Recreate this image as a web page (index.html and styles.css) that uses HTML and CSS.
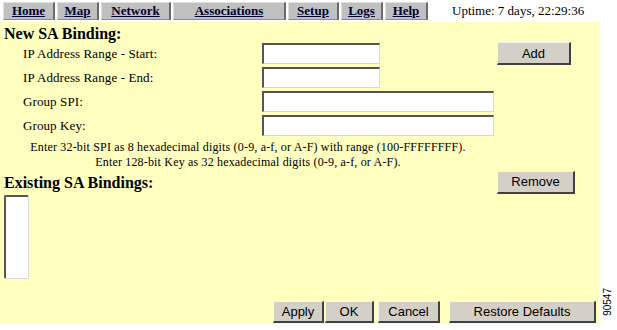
FILE: index.html
```html
<!DOCTYPE html>
<html lang="en">
  <head>
    <meta charset="UTF-8" />
    <title>SA Binding</title>
    <link rel="stylesheet" href="styles.css">
  </head>
  <body>
    <div class="topbar">
      <div class="nav">
        <a class="nav-item w-home" href="#">Home</a>
        <a class="nav-item w-map" href="#">Map</a>
        <a class="nav-item w-network" href="#">Network</a>
        <a class="nav-item w-assoc" href="#">Associations</a>
        <a class="nav-item w-setup" href="#">Setup</a>
        <a class="nav-item w-logs" href="#">Logs</a>
        <a class="nav-item w-help" href="#">Help</a>
      </div>
      <div class="uptime">Uptime: 7 days, 22:29:36</div>
    </div>
    <div class="main">
      <div class="panel">
        <div class="title">New SA Binding:</div>
        <div class="form">
          <label class="label">IP Address Range - Start:</label>
          <input class="field short" type="text">
          <button class="btn btn-add">Add</button>
          <label class="label">IP Address Range - End:</label>
          <input class="field short" type="text">
          <span></span>
          <label class="label">Group SPI:</label>
          <input class="field long" type="text">
          <span></span>
          <label class="label">Group Key:</label>
          <input class="field long" type="text">
          <span></span>
        </div>
        <div class="hint">
          Enter 32-bit SPI as 8 hexadecimal digits (0-9, a-f, or A-F) with range (100-FFFFFFFF).<br>
          Enter 128-bit Key as 32 hexadecimal digits (0-9, a-f, or A-F).
        </div>
        <div class="existing">
          <div class="title">Existing SA Bindings:</div>
          <button class="btn btn-remove">Remove</button>
        </div>
        <select class="listbox" size="5"></select>
        <div class="actions">
          <button class="btn btn-apply">Apply</button>
          <button class="btn btn-ok">OK</button>
          <button class="btn btn-cancel">Cancel</button>
          <button class="btn btn-restore">Restore Defaults</button>
        </div>
      </div>
      <div class="side">
        <span class="figure-id">90547</span>
      </div>
    </div>
  </body>
</html>
```

FILE: styles.css
```css
body {
  margin: 0;
  background: #fff;
  color: #000;
  font-family: "Liberation Serif", "Times New Roman", serif;
}
.topbar {
  display: flex;
  align-items: center;
  height: 22px;
}
.nav {
  display: flex;
  gap: 2px;
  padding-left: 3px;
  height: 18px;
}
.nav-item {
  box-sizing: border-box;
  display: flex;
  justify-content: center;
  align-items: center;
  height: 18px;
  background: #c0c0c0;
  border-top: 1px solid #e0e0e0;
  border-left: 1px solid #e0e0e0;
  border-right: 2px solid #6a6a6a;
  border-bottom: 1px solid #8a8a8a;
  color: #000033;
  font-weight: bold;
  font-size: 13px;
  text-decoration: underline;
}
.w-home { width: 52px; }
.w-map { width: 42px; }
.w-network { width: 70px; }
.w-assoc { width: 113px; }
.w-setup { width: 51px; }
.w-logs { width: 42px; }
.w-help { width: 43px; }
.uptime {
  margin-left: 24px;
  font-size: 13px;
}
.main {
  display: flex;
}
.panel {
  box-sizing: border-box;
  display: flex;
  flex-direction: column;
  width: 599px;
  height: 302px;
  padding-top: 2px;
  background: #ffffc0;
}
.title {
  margin-left: 4px;
  height: 19px;
  line-height: 19px;
  font-size: 16px;
  font-weight: bold;
}
.form {
  display: grid;
  grid-template-columns: 262px 235px auto;
  grid-auto-rows: 21px;
  row-gap: 3px;
  align-items: center;
}
.label {
  padding-left: 23px;
  font-size: 13px;
  letter-spacing: 0.1px;
}
.field {
  box-sizing: border-box;
  height: 21px;
  margin: 0;
  padding: 1px 3px;
  background: #fff;
  border-style: solid;
  border-width: 2px 1px 1px 2px;
  border-color: #555 #d8d8d8 #d8d8d8 #555;
  font-family: "Liberation Sans", Arial, sans-serif;
  font-size: 13px;
}
.short { width: 118px; }
.long { width: 232px; }
.btn {
  box-sizing: border-box;
  margin: 0;
  padding: 0;
  height: 23px;
  background: #d4d0c8;
  border-style: solid;
  border-width: 1px 2px 2px 1px;
  border-color: #f4f4f4 #404040 #404040 #f4f4f4;
  color: #000;
  font-family: "Liberation Sans", Arial, sans-serif;
  font-size: 13px;
}
.btn-add {
  width: 74px;
  align-self: start;
  margin-top: -1px;
}
.hint {
  width: 496px;
  margin-top: 4px;
  line-height: 15px;
  font-size: 12px;
  letter-spacing: 0.17px;
  text-align: center;
}
.existing {
  display: flex;
  justify-content: space-between;
  align-items: center;
  width: 575px;
  height: 24px;
}
.btn-remove {
  width: 78px;
}
.listbox {
  box-sizing: border-box;
  width: 25px;
  height: 84px;
  margin: 1px 0 0 4px;
  background: #fff;
  border-style: solid;
  border-width: 2px 1px 1px 2px;
  border-color: #555 #d8d8d8 #d8d8d8 #555;
}
.actions {
  display: flex;
  justify-content: flex-end;
  margin-top: auto;
  padding: 0 3px 1px 0;
}
.actions .btn {
  height: 22px;
}
.btn-apply { width: 51px; }
.btn-ok { width: 49px; margin-left: 1px; }
.btn-cancel { width: 62px; margin-left: 4px; }
.btn-restore { width: 147px; margin-left: 9px; }
.side {
  display: flex;
  align-items: flex-end;
  padding: 0 0 8px 3px;
}
.figure-id {
  writing-mode: vertical-rl;
  transform: rotate(180deg);
  font-family: "Liberation Sans", Arial, sans-serif;
  font-size: 10px;
}
```
